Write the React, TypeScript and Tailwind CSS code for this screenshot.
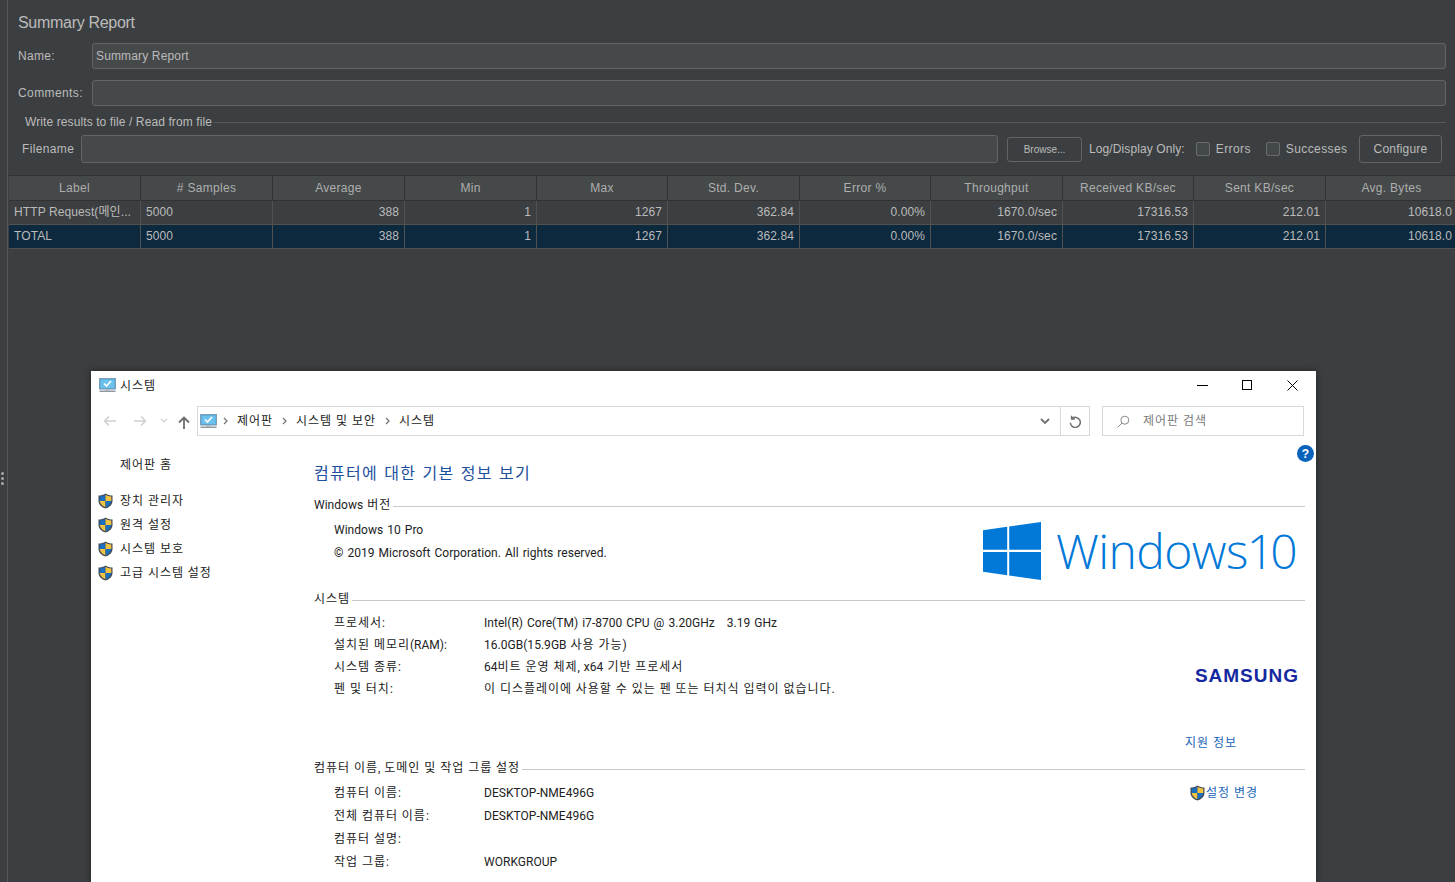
const COLUMNS = ['Label', '# Samples', 'Average', 'Min', 'Max', 'Std. Dev.', 'Error %', 'Throughput', 'Received KB/sec', 'Sent KB/sec', 'Avg. Bytes']
const NUMBERS = ['388', '1', '1267', '362.84', '0.00%', '1670.0/sec', '17316.53', '212.01', '10618.0']
const GRID = 'grid w-[1448px] grid-cols-[132px_132px_132px_132px_131px_132px_131px_132px_131px_132px_131px]'

const SIDE_LINKS = ['장치 관리자', '원격 설정', '시스템 보호', '고급 시스템 설정']

const SYSTEM_ROWS = [
  ['프로세서:', 'Intel(R) Core(TM) i7-8700 CPU @ 3.20GHz   3.19 GHz'],
  ['설치된 메모리(RAM):', '16.0GB(15.9GB 사용 가능)'],
  ['시스템 종류:', '64비트 운영 체제, x64 기반 프로세서'],
  ['펜 및 터치:', '이 디스플레이에 사용할 수 있는 펜 또는 터치식 입력이 없습니다.'],
]

const COMPUTER_ROWS = [
  ['컴퓨터 이름:', 'DESKTOP-NME496G'],
  ['전체 컴퓨터 이름:', 'DESKTOP-NME496G'],
  ['컴퓨터 설명:', ''],
  ['작업 그룹:', 'WORKGROUP'],
]

// hangul in the fallback font runs a little narrower than Malgun Gothic
function Ko({ text, spacing = '[word-spacing:0px]' }: { text: string; spacing?: string }) {
  return (
    <>
      {text.split(/([가-힣][가-힣 ]*)/).map((part, i) =>
        i % 2 === 1 ? <span key={i} className={`tracking-[0.08em] ${spacing}`}>{part}</span> : part
      )}
    </>
  )
}

function Shield() {
  return (
    <svg width="15" height="16" viewBox="0 0 15 16" className="shrink-0">
      <path d="M7.5 0.4 C9.5 1.8 12 2.4 14.5 2.4 V8 C14.5 11.6 11.2 14.4 7.5 15.6 C3.8 14.4 0.5 11.6 0.5 8 V2.4 C3 2.4 5.5 1.8 7.5 0.4 Z" fill="#3f4a55" />
      <path d="M7.5 1.8 V8 H1.7 V3.5 C3.8 3.4 5.9 2.8 7.5 1.8 Z" fill="#1a6fc0" />
      <path d="M7.5 1.8 V8 H13.3 V3.5 C11.2 3.4 9.1 2.8 7.5 1.8 Z" fill="#f3c23f" />
      <path d="M1.7 8 H7.5 V14.2 C4.6 13.1 1.9 11 1.7 8 Z" fill="#f3c23f" />
      <path d="M13.3 8 H7.5 V14.2 C10.4 13.1 13.1 11 13.3 8 Z" fill="#1a6fc0" />
    </svg>
  )
}

function MonitorIcon() {
  return (
    <svg width="17" height="15" viewBox="0 0 17 15" className="shrink-0">
      <rect x="0.5" y="0.5" width="16" height="10.5" fill="#4aa3d8" stroke="#7f9db0" />
      <rect x="1.5" y="1.5" width="14" height="8.5" fill="#6cc0ec" />
      <path d="M5 5.5 L7.5 8 L12 3" fill="none" stroke="#ffffff" strokeWidth="1.6" />
      <rect x="6" y="11" width="5" height="1.5" fill="#b4bcc2" />
      <rect x="0.5" y="12.5" width="16" height="1.5" fill="#8e9aa3" />
    </svg>
  )
}

function WindowsLogo() {
  return (
    <svg width="58" height="58" viewBox="0 0 58 58" className="shrink-0">
      <path d="M0 8.2 L24.2 4.8 V27.8 H0 Z" fill="#0078d7" />
      <path d="M26.2 4.5 L58 0 V27.8 H26.2 Z" fill="#0078d7" />
      <path d="M0 30 H24.2 V53.2 L0 49.8 Z" fill="#0078d7" />
      <path d="M26.2 30 H58 V58 L26.2 53.5 Z" fill="#0078d7" />
    </svg>
  )
}

function DarkInput({ value, className }: { value?: string; className: string }) {
  return (
    <div className={`flex items-center rounded-[3px] border border-[#646464] bg-[#45494a] pl-[3px] tracking-[0.15px] ${className}`}>
      {value}
    </div>
  )
}

function Checkbox({ label }: { label: string }) {
  return (
    <div className="flex items-center gap-[6px]">
      <span className="h-[14px] w-[14px] rounded-[2px] border border-[#6b6b6b] bg-[#43494a]" />
      <span className="tracking-[0.4px]">{label}</span>
    </div>
  )
}

function ResultRow({ first, selected }: { first: string; selected?: boolean }) {
  const bg = selected ? 'bg-[#0d293e]' : 'bg-[#3c3f41]'
  return (
    <div className={`${GRID} h-[24px] border-b border-[#515151] ${bg}`}>
      <div className="truncate border-r border-[#515151] px-[5px] leading-[23px]">{first}</div>
      <div className="border-r border-[#515151] px-[5px] leading-[23px]">5000</div>
      {NUMBERS.map((n, i) => (
        <div key={i} className="border-r border-[#515151] px-[5px] text-right leading-[23px] last:border-r-0">{n}</div>
      ))}
    </div>
  )
}

function JMeterPanel() {
  return (
    <div className="flex h-[370px] min-w-0 flex-1 flex-col">
      <div className="pl-[10px] pr-[9px]">
        <div className="pt-[13px] text-[16px] leading-[20px] tracking-[-0.3px] text-[#bbbbbb]">Summary Report</div>
        <div className="mt-[10px] flex items-center">
          <span className="w-[74px] tracking-[0.3px]">Name:</span>
          <DarkInput value="Summary Report" className="h-[26px] flex-1" />
        </div>
        <div className="mt-[11px] flex items-center">
          <span className="w-[74px] tracking-[0.4px]">Comments:</span>
          <DarkInput className="h-[26px] flex-1" />
        </div>
        <div className="mt-[9px] flex h-[14px] items-center pl-[7px]">
          <span>Write results to file / Read from file</span>
          <span className="ml-[2px] h-px flex-1 bg-[#565a5c]" />
        </div>
        <div className="mt-[6px] flex h-[28px] items-center pl-[4px] pr-[4px]">
          <span className="w-[59px] tracking-[0.35px]">Filename</span>
          <DarkInput className="h-[28px] w-[917px]" />
          <button className="ml-[9px] h-[25px] w-[75px] rounded-[3px] border border-[#646464] bg-[#3c3f41] text-[10px] tracking-[0px] text-[#bbbbbb]">Browse...</button>
          <span className="ml-[7px]">Log/Display Only:</span>
          <div className="ml-[11px]"><Checkbox label="Errors" /></div>
          <div className="ml-[15px]"><Checkbox label="Successes" /></div>
          <button className="ml-auto h-[28px] w-[83px] rounded-[3px] border border-[#646464] bg-[#3c3f41] tracking-[0.2px] text-[#bbbbbb]">Configure</button>
        </div>
      </div>
      <div className="ml-px mt-[12px]">
        <div className={`${GRID} h-[26px] border-y border-[#323232] bg-[#45494a]`}>
          {COLUMNS.map(c => (
            <div key={c} className="border-r border-[#323232] text-center leading-[25px] tracking-[0.3px] text-[#aeaeae] last:border-r-0">{c}</div>
          ))}
        </div>
        <ResultRow first="HTTP Request(메인..." />
        <ResultRow first="TOTAL" selected />
      </div>
    </div>
  )
}

function Breadcrumb() {
  const parts = ['제어판', '시스템 및 보안', '시스템']
  return (
    <div className="flex flex-1 items-center pl-[2px]">
      <div className="-mr-[3px]"><MonitorIcon /></div>
      {parts.map(p => (
        <div key={p} className="flex items-center">
          <svg width="5" height="8" viewBox="0 0 5 8" className="ml-[9px] mr-[9px]"><path d="M1 1 L4 4 L1 7" fill="none" stroke="#777777" strokeWidth="1.3" /></svg>
          <span><Ko text={p} /></span>
        </div>
      ))}
    </div>
  )
}

function SectionTitle({ title }: { title: string }) {
  return (
    <div className="flex h-[18px] items-center">
      <span className="text-[#222222]"><Ko text={title} /></span>
      <span className="ml-[2px] mt-[3px] h-px flex-1 bg-[#c8c8c8]" />
    </div>
  )
}

function InfoRow({ label, value, height }: { label: string; value: string; height: string }) {
  return (
    <div className={`flex items-center pl-[20px] ${height}`}>
      <span className="w-[150px]"><Ko text={label} /></span>
      <span className="whitespace-pre"><Ko text={value} /></span>
    </div>
  )
}

function SystemWindow() {
  return (
    <div className="absolute left-[91px] top-[371px] flex h-[511px] w-[1225px] flex-col overflow-hidden bg-white text-[12px] tracking-[0.03px] text-[#222222] shadow-[0_0_7px_rgba(0,0,0,0.45)] [font-family:'Roboto','Noto_Sans_CJK_KR',sans-serif] [word-spacing:1px]">
      {/* title bar */}
      <div className="flex h-[28px] shrink-0 items-center pl-[8px]">
        <MonitorIcon />
        <span className="ml-[4px] mt-[2px]"><Ko text="시스템" /></span>
        <div className="ml-auto flex items-center pr-[18px]">
          <span className="h-px w-[11px] bg-black" />
          <span className="ml-[34px] h-[10px] w-[10px] border border-black" />
          <svg width="11" height="11" viewBox="0 0 11 11" className="ml-[35px]">
            <path d="M0.5 0.5 L10.5 10.5 M10.5 0.5 L0.5 10.5" stroke="#000000" strokeWidth="1" />
          </svg>
        </div>
      </div>

      {/* address row */}
      <div className="mt-[7px] flex h-[30px] shrink-0 items-center pl-[12px]">
        <div className="flex w-[94px] items-center">
          <svg width="14" height="12" viewBox="0 0 14 12"><path d="M13 6 H2 M6 1.5 L1.5 6 L6 10.5" fill="none" stroke="#d0d0d0" strokeWidth="1.6" /></svg>
          <svg width="14" height="12" viewBox="0 0 14 12" className="ml-[16px]"><path d="M1 6 H12 M8 1.5 L12.5 6 L8 10.5" fill="none" stroke="#d0d0d0" strokeWidth="1.6" /></svg>
          <svg width="8" height="6" viewBox="0 0 8 6" className="ml-[13px]"><path d="M1 1 L4 4 L7 1" fill="none" stroke="#d0d0d0" strokeWidth="1.2" /></svg>
          <svg width="12" height="13" viewBox="0 0 12 13" className="ml-[10px] mt-[2px]"><path d="M6 13 V2 M1 6.5 L6 1.5 L11 6.5" fill="none" stroke="#6d6d6d" strokeWidth="1.8" /></svg>
        </div>
        <div className="flex h-[30px] w-[893px] items-center border border-[#d9d9d9]">
          <Breadcrumb />
          <svg width="10" height="7" viewBox="0 0 10 7" className="mr-[10px]"><path d="M1 1 L5 5 L9 1" fill="none" stroke="#707070" strokeWidth="1.8" /></svg>
          <div className="flex h-full w-[29px] items-center justify-center border-l border-[#d9d9d9]">
            <svg width="12" height="13" viewBox="0 0 12 13"><path d="M3 3.6 A5 5 0 1 1 1.3 7.8 M2.6 0.8 V3.9 H5.8" fill="none" stroke="#707070" strokeWidth="1.5" /></svg>
          </div>
        </div>
        <div className="ml-[12px] flex h-[30px] w-[202px] items-center border border-[#d9d9d9] pl-[14px] text-[#7a7a7a]">
          <svg width="13" height="13" viewBox="0 0 13 13"><circle cx="7.8" cy="5.2" r="4" fill="none" stroke="#8a8a8a" /><path d="M4.8 8.2 L0.8 12.2" stroke="#8a8a8a" /></svg>
          <span className="ml-[13px]"><Ko text="제어판 검색" /></span>
        </div>
      </div>

      {/* body */}
      <div className="relative flex flex-1">
        <div className="w-[223px] shrink-0 pl-[7px] pt-[19px]">
          <div className="pl-[22px] leading-[20px]"><Ko text="제어판 홈" /></div>
          <div className="mt-[16px] flex flex-col gap-[4px]">
            {SIDE_LINKS.map(l => (
              <div key={l} className="flex h-[20px] items-center gap-[7px]">
                <Shield />
                <span><Ko text={l} /></span>
              </div>
            ))}
          </div>
        </div>

        <div className="w-[991px] pt-[26px]">
          <div className="text-[16px] leading-[24px] text-[#1c4f9c]"><Ko text="컴퓨터에 대한 기본 정보 보기" spacing="[word-spacing:1px]" /></div>

          <div className="mt-[10px]"><SectionTitle title="Windows 버전" /></div>
          <div className="flex h-[76px] items-start justify-between pr-[8px]">
            <div className="pl-[20px] pt-[5px]">
              <div className="leading-[23px]">Windows 10 Pro</div>
              <div className="leading-[23px]">© 2019 Microsoft Corporation. All rights reserved.</div>
            </div>
            <div className="flex items-center pt-[8px]">
              <WindowsLogo />
              <span className="ml-[15px] text-[48px] font-[350] leading-[58px] tracking-[-0.55px] text-[#0078d7] [font-family:'Open_Sans',sans-serif] [word-spacing:-13px]">
                Windows <span className="tracking-[-4px]">1</span>0
              </span>
            </div>
          </div>

          <SectionTitle title="시스템" />
          <div className="flex h-[151px] justify-between">
            <div className="pt-[4px]">
              {SYSTEM_ROWS.map(r => <InfoRow key={r[0]} label={r[0]} value={r[1]} height="h-[22px]" />)}
            </div>
            <div className="flex w-[120px] flex-col pt-[56px]">
              <span className="pr-[6px] text-right text-[19px] font-bold leading-[24px] tracking-[1px] text-[#1428a0] [font-family:'Liberation_Sans',sans-serif]">SAMSUNG</span>
              <span className="mt-[45px] leading-[20px] text-[#1a66b8]"><Ko text="지원 정보" /></span>
            </div>
          </div>

          <SectionTitle title="컴퓨터 이름, 도메인 및 작업 그룹 설정" />
          <div className="flex justify-between">
            <div className="pt-[4px]">
              {COMPUTER_ROWS.map(r => <InfoRow key={r[0]} label={r[0]} value={r[1]} height="h-[23px]" />)}
            </div>
            <div className="flex h-[24px] w-[115px] items-center pt-[8px] text-[#1a66b8]">
              <Shield />
              <span className="ml-px"><Ko text="설정 변경" /></span>
            </div>
          </div>
        </div>

        <div className="absolute left-[1206px] top-[9px] flex h-[17px] w-[17px] items-center justify-center rounded-full bg-[#0a63bb] text-[12px] font-bold text-white [font-family:'Liberation_Sans',sans-serif]">?</div>
      </div>
    </div>
  )
}

export default function App() {
  return (
    <div className="relative flex h-[882px] w-[1455px] overflow-hidden bg-[#3c3f41] text-[12px] tracking-[0.1px] text-[#bbbbbb] [font-family:'Liberation_Sans','Noto_Sans_CJK_KR',sans-serif]">
      <div className="flex w-[8px] shrink-0 flex-col items-center justify-center gap-[2px] border-r border-[#55585a] pr-[3px] pt-[74px]">
        <span className="h-[3px] w-[3px] rounded-full bg-[#a8a8a8]" />
        <span className="h-[3px] w-[3px] rounded-full bg-[#a8a8a8]" />
        <span className="h-[3px] w-[3px] rounded-full bg-[#a8a8a8]" />
      </div>
      <JMeterPanel />
      <SystemWindow />
    </div>
  )
}
